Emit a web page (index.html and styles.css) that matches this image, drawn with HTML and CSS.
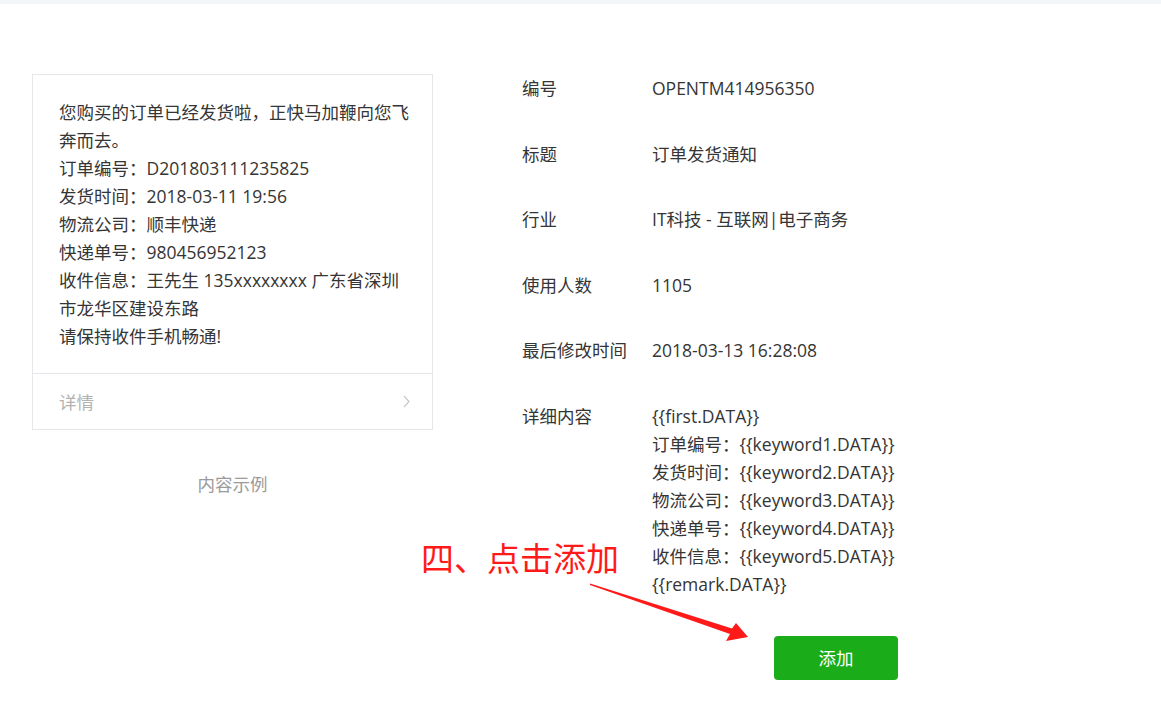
FILE: index.html
```html
<!DOCTYPE html>
<html lang="zh-CN">
<head>
    <meta charset="UTF-8">
    <meta name="viewport" content="width=device-width, initial-scale=1.0">
    <title>模板详情</title>
    <link rel="stylesheet" href="styles.css">
</head>
<body>
    <div class="topbar"></div>

    <div class="page">
        <!-- 左侧：消息预览 -->
        <div class="preview">
            <div class="msg-card">
                <div class="msg-body">
                    <p>您购买的订单已经发货啦，正快马加鞭向您飞奔而去。</p>
                    <p>订单编号：D201803111235825</p>
                    <p>发货时间：2018-03-11 19:56</p>
                    <p>物流公司：顺丰快递</p>
                    <p>快递单号：980456952123</p>
                    <p>收件信息：王先生 135xxxxxxxx 广东省深圳市龙华区建设东路</p>
                    <p>请保持收件手机畅通!</p>
                </div>
                <div class="msg-footer">
                    <span>详情</span>
                    <svg class="chevron" width="7" height="13" viewBox="0 0 7 13">
                        <path d="M1 1 L6 6.5 L1 12" fill="none" stroke="#c7c7cc" stroke-width="1.2"/>
                    </svg>
                </div>
            </div>
            <div class="preview-caption">内容示例</div>
        </div>

        <!-- 右侧：模板信息 -->
        <div class="info">
            <div class="info-row">
                <div class="info-label">编号</div>
                <div class="info-value">OPENTM414956350</div>
            </div>
            <div class="info-row">
                <div class="info-label">标题</div>
                <div class="info-value">订单发货通知</div>
            </div>
            <div class="info-row">
                <div class="info-label">行业</div>
                <div class="info-value">IT科技 - 互联网|电子商务</div>
            </div>
            <div class="info-row">
                <div class="info-label">使用人数</div>
                <div class="info-value">1105</div>
            </div>
            <div class="info-row">
                <div class="info-label">最后修改时间</div>
                <div class="info-value">2018-03-13 16:28:08</div>
            </div>
            <div class="info-row">
                <div class="info-label">详细内容</div>
                <div class="info-value">
                    {{first.DATA}}<br>
                    订单编号：{{keyword1.DATA}}<br>
                    发货时间：{{keyword2.DATA}}<br>
                    物流公司：{{keyword3.DATA}}<br>
                    快递单号：{{keyword4.DATA}}<br>
                    收件信息：{{keyword5.DATA}}<br>
                    {{remark.DATA}}
                </div>
            </div>
            <button class="add-btn">添加</button>
        </div>
    </div>

    <!-- 标注 -->
    <div class="tip-text">四、点击添加</div>
    <svg class="tip-arrow" width="170" height="70" viewBox="0 0 170 70">
        <polygon points="5,5.5 147,50.5 151,45 163,59 141,63 145,56 5,7" fill="#ff1a1a"/>
    </svg>
</body>
</html>
```

FILE: styles.css
```css
* {
    margin: 0;
    padding: 0;
    box-sizing: border-box;
}

body {
    font-family: "Open Sans", "Noto Sans CJK SC", sans-serif;
    font-size: 17.5px;
    color: #353535;
    background: #fff;
    position: relative;
    min-height: 100vh;
}

.topbar {
    height: 4px;
    background: #f4f5f7;
}

.page {
    display: flex;
    align-items: flex-start;
    padding: 70px 0 0 32px;
}

.preview {
    width: 401px;
    flex-shrink: 0;
}

.msg-card {
    border: 1px solid #e7e7eb;
    background: #fff;
}

.msg-body {
    padding: 23px 20px 23px 26px;
    line-height: 28px;
}

.msg-footer {
    height: 56px;
    border-top: 1px solid #e7e7eb;
    display: flex;
    align-items: center;
    justify-content: space-between;
    padding: 0 22px 0 26px;
    color: #b2b2b2;
}

.preview-caption {
    margin-top: 40px;
    text-align: center;
    color: #9a9a9a;
    line-height: 28px;
}

.info {
    width: 376px;
    margin-left: 89px;
    display: flex;
    flex-direction: column;
}

.info-row {
    display: flex;
    line-height: 28px;
    margin-bottom: 37.6px;
}

.info-label {
    width: 130px;
    flex-shrink: 0;
}

.info-value {
    flex: 1;
    white-space: nowrap;
}

.add-btn {
    align-self: flex-end;
    width: 124px;
    height: 44px;
    border: none;
    border-radius: 4px;
    background: #1aad19;
    color: #fff;
    font-family: inherit;
    font-size: 17.5px;
    cursor: pointer;
}

.tip-text {
    position: absolute;
    left: 421px;
    top: 537px;
    font-size: 33px;
    line-height: 40px;
    color: #ff1a1a;
    font-family: "Noto Sans CJK SC", sans-serif;
}

.tip-arrow {
    position: absolute;
    left: 585px;
    top: 578px;
}
```
